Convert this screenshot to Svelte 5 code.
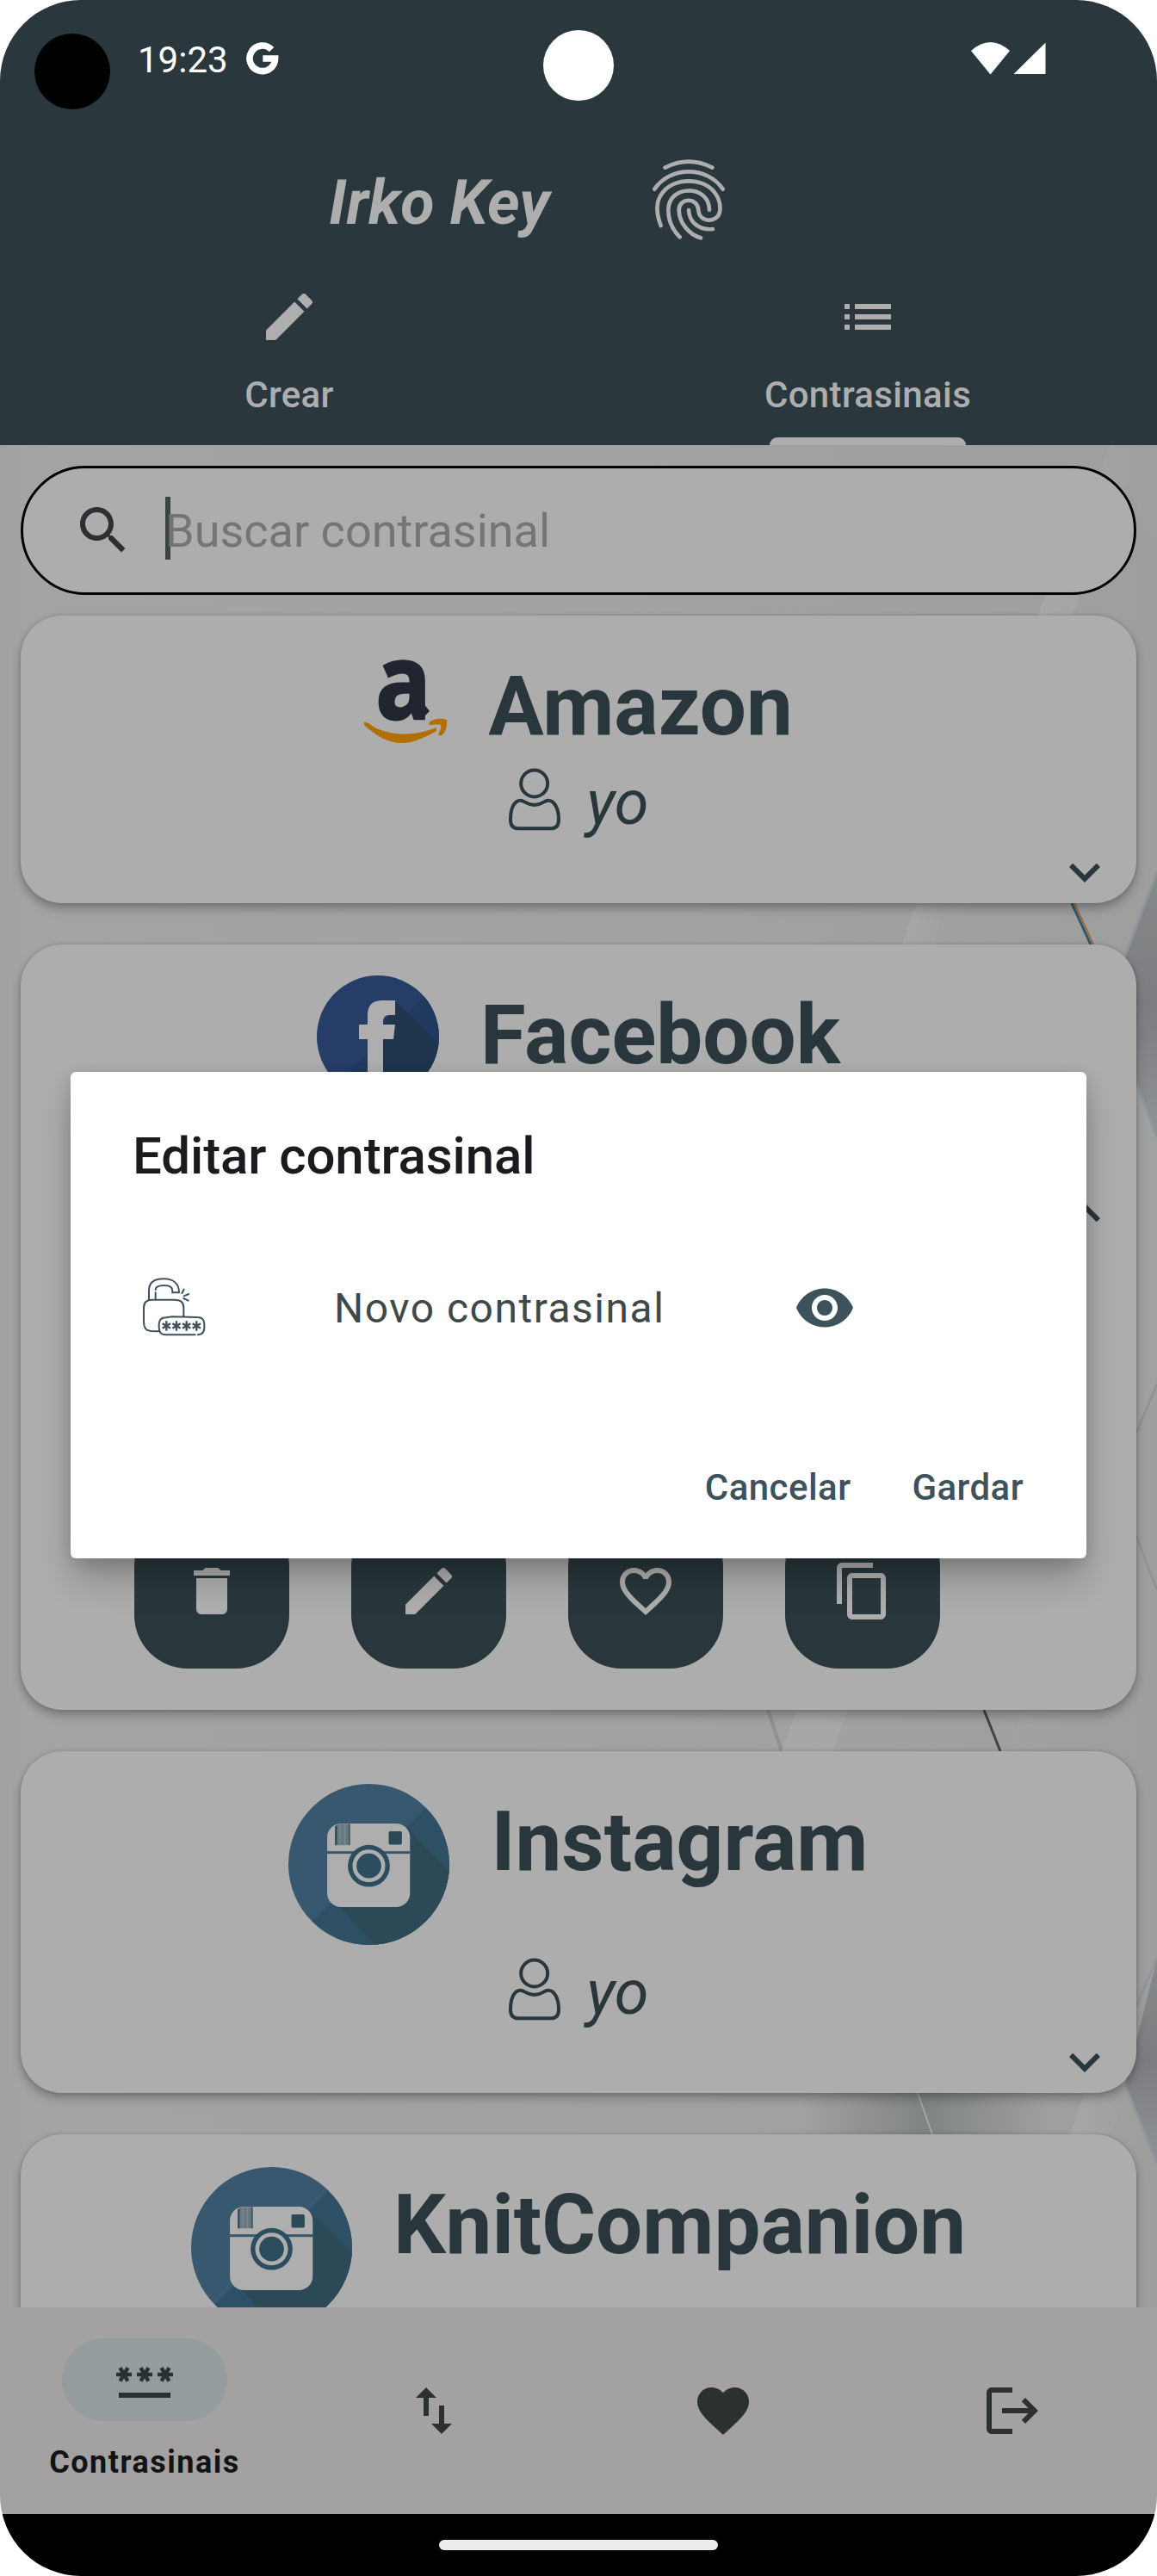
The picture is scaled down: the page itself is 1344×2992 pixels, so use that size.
<script>
  const icons = {
    edit: 'M3 17.25V21h3.75L17.81 9.94l-3.75-3.75L3 17.25zM20.71 7.04c.39-.39.39-1.02 0-1.41l-2.34-2.34c-.39-.39-1.02-.39-1.41 0l-1.83 1.83 3.75 3.75 1.83-1.83z',
    list: 'M3 13h2v-2H3v2zm0 4h2v-2H3v2zm0-8h2V7H3v2zm4 4h14v-2H7v2zm0 4h14v-2H7v2zM7 7v2h14V7H7z',
    search: 'M15.5 14h-.79l-.28-.27C15.41 12.59 16 11.11 16 9.5 16 5.91 13.09 3 9.5 3S3 5.91 3 9.5 5.91 16 9.5 16c1.61 0 3.09-.59 4.23-1.57l.27.28v.79l5 4.99L20.49 19l-4.99-5zm-6 0C7.01 14 5 11.99 5 9.5S7.01 5 9.5 5 14 7.01 14 9.5 11.99 14 9.5 14z',
    down: 'M16.59 8.59L12 13.17 7.41 8.59 6 10l6 6 6-6z',
    up: 'M12 8l-6 6 1.41 1.41L12 10.83l4.59 4.58L18 14z',
    trash: 'M6 19c0 1.1.9 2 2 2h8c1.1 0 2-.9 2-2V7H6v12zM19 4h-3.5l-1-1h-5l-1 1H5v2h14V4z',
    heartLine: 'M16.5 3c-1.74 0-3.41.81-4.5 2.09C10.91 3.81 9.24 3 7.5 3 4.42 3 2 5.42 2 8.5c0 3.78 3.4 6.86 8.55 11.54L12 21.35l1.45-1.32C18.6 15.36 22 12.28 22 8.5 22 5.42 19.58 3 16.5 3zm-4.4 15.55l-.1.1-.1-.1C7.14 14.24 4 11.39 4 8.5 4 6.5 5.5 5 7.5 5c1.54 0 3.04.99 3.57 2.36h1.87C13.46 5.99 14.96 5 16.5 5c2 0 3.5 1.5 3.5 3.5 0 2.89-3.14 5.74-7.9 10.05z',
    copy: 'M16 1H4c-1.1 0-2 .9-2 2v14h2V3h12V1zm3 4H8c-1.1 0-2 .9-2 2v14c0 1.1.9 2 2 2h11c1.1 0 2-.9 2-2V7c0-1.1-.9-2-2-2zm0 16H8V7h11v14z',
    eye: 'M12 4.5C7 4.5 2.73 7.61 1 12c1.73 4.39 6 7.5 11 7.5s9.27-3.11 11-7.5c-1.73-4.39-6-7.5-11-7.5zM12 17c-2.76 0-5-2.24-5-5s2.24-5 5-5 5 2.24 5 5-2.24 5-5 5zm0-8c-1.66 0-3 1.34-3 3s1.34 3 3 3 3-1.34 3-3-1.34-3-3-3z',
    swap: 'M9 3L5 6.99h3V14h2V6.99h3L9 3zm7 14.01V10h-2v7.01h-3L15 21l4-3.99h-3z',
    heart: 'M12 21.35l-1.45-1.32C5.4 15.36 2 12.28 2 8.5 2 5.42 4.42 3 7.5 3c1.74 0 3.41.81 4.5 2.09C13.09 3.81 14.76 3 16.5 3 19.58 3 22 5.42 22 8.5c0 3.78-3.4 6.86-8.55 11.54L12 21.35z',
    logout: 'M17 7l-1.41 1.41L18.17 11H8v2h10.17l-2.58 2.58L17 17l5-5zM4 5h8V3H4c-1.1 0-2 .9-2 2v14c0 1.1.9 2 2 2h8v-2H4V5z',
    star: 'M3.15 12.95L4 11.47l.85 1.48 1.3-.75-.85-1.48H7v-1.5H5.3l.85-1.47L4.85 7 4 8.47 3.15 7l-1.3.75.85 1.47H1v1.5h1.7l-.85 1.48z',
  };
  const entries = [
    { name: 'Amazon', kind: 'amazon', user: 'yo' },
    { name: 'Facebook', kind: 'facebook', open: true },
    { name: 'Instagram', kind: 'instagram', user: 'yo' },
    { name: 'KnitCompanion', kind: 'knit' },
  ];
  const actions = ['trash', 'edit', 'heartLine', 'copy'];
</script>

{#snippet icon(name)}
  <svg class="icon" viewBox="0 0 24 24"><path d={icons[name]} /></svg>
{/snippet}

{#snippet logo(kind)}
  {#if kind === 'amazon'}
    <svg class="logo" width="96" height="96" viewBox="0 0 96 96">
      <text class="amazon-a" x="13.5" y="68" textLength="64" lengthAdjust="spacingAndGlyphs">a</text>
      <path class="tail" d="M57 56L67 68L76 59L69 50Z" />
      <path class="smile" d="M0 72 C4 71 8 76 14 79 C36 88 58 88 84 78 L84 82 C66 92 55 96 44 96 C28 96 14 88 0 75Z" />
      <path class="smile" d="M75 74 C76 69 87 66 96 69 C97 77 94 85 89 88 L86 86 C88 82 90 78 89 75 C85 74 81 75 76 75Z" />
    </svg>
  {:else if kind === 'facebook'}
    <svg class="logo" width="142" height="142" viewBox="0 0 142 142">
      <clipPath id="fb"><circle cx="71" cy="71" r="71" /></clipPath>
      <g clip-path="url(#fb)">
        <rect width="142" height="142" fill="#263d68" />
        <path d="M125 24L20 129L60 160H160V20Z" fill="#22395e" />
        <path d="M92 30L142 80V142H60V90Z" fill="#1f354e" />
      </g>
      <path d="M49 57H59V44Q60 29 76 29H91V46H84Q77 46 77 54V57H91L89 74H77V142H59V74H49Z" fill="#aeaeae" />
    </svg>
  {:else}
    <svg class="logo" width="187" height="187" viewBox="48 37 560 560">
      <clipPath id="ig"><circle cx="328" cy="317" r="280" /></clipPath>
      <g clip-path="url(#ig)">
        <rect x="48" y="37" width="560" height="560" fill="#38586f" />
        <path d="M525 120L125 520L345 740L750 335Z" fill="#2e5064" />
        <path d="M465 195L640 370V620H370L225 465Z" fill="#2c4958" />
      </g>
      <rect x="183" y="175" width="288" height="290" rx="48" fill="#aeaeae" />
      <path d="M210 185L218 178V250H210Z" fill="#2f4b59" />
      <rect x="218" y="176" width="42" height="74" fill="#687880" />
      <path d="M228 176V250M244 176V250" stroke="#7b888e" stroke-width="4" />
      <rect x="257" y="176" width="6" height="74" fill="#425a66" />
      <rect x="397" y="202" width="46" height="46" rx="5" fill="#2c4958" />
      <rect x="183" y="271" width="288" height="9" fill="#38586a" />
      <circle cx="328" cy="322" r="73" fill="#2c4d5e" />
      <circle cx="328" cy="322" r="57" fill="#aeaeae" />
      <circle cx="328" cy="322" r="43" fill="#2c4d5e" />
    </svg>
  {/if}
{/snippet}

<div class="phone">
  <header>
    <div class="status">
      <span class="clock">19:23</span>
      <svg class="google" width="38" height="38" viewBox="0 0 38 38">
        <path d="M29.5 8.6A14.8 14.8 0 1 0 33.6 19H19.3" fill="none" stroke="#fff" stroke-width="7.6" />
      </svg>
      <svg class="signal" width="88" height="38" viewBox="0 0 88 38">
        <path d="M0 10Q22.5 -10 45 10L22.5 37.5Z" fill="#fff" />
        <path d="M86.500 .5V37H49.500Z" fill="#fff" />
      </svg>
    </div>
    <div class="brand">
      <h1>Irko Key</h1>
      <svg class="finger" width="120" height="120" viewBox="0 0 360 360">
        <path d="M98 74Q180 32 262 74M61 149C115 68 245 68 299 149M83 276C63 225 69 185 90 160C130 108 230 108 270 160C284 178 291 200 289 222C286 269 216 269 214 222C211 177 147 177 146 222C146 265 180 307 222 319M252 221C252 132 108 132 109 222C109 258 125 292 149 316M180 222C182 266 218 293 264 288" />
      </svg>
    </div>
    <nav class="tabs">
      <div class="tab">{@render icon('edit')}<span>Crear</span></div>
      <div class="tab active">{@render icon('list')}<span>Contrasinais</span></div>
    </nav>
  </header>

  <main>
    <svg class="backdrop" width="1344" height="2163" viewBox="0 517 1344 2163">
      <defs>
        <linearGradient id="base" x1="0" x2="1" y1="0" y2="0">
          <stop offset="0" stop-color="#a1a1a1" /><stop offset=".02" stop-color="#a4a4a4" />
          <stop offset=".6" stop-color="#a2a2a2" /><stop offset="1" stop-color="#9e9e9e" />
        </linearGradient>
        <linearGradient id="dusk" x1="0" x2="0" y1="0" y2="1">
          <stop offset="0" stop-color="#88898a" /><stop offset=".5" stop-color="#7c7d80" /><stop offset="1" stop-color="#909294" />
        </linearGradient>
        <linearGradient id="fade" x1="0" x2="1" y1="0" y2="0">
          <stop offset="0" stop-color="#7f8382" stop-opacity="0" /><stop offset="1" stop-color="#7f8382" />
        </linearGradient>
        <linearGradient id="unfade" x1="0" x2="1" y1="0" y2="0">
          <stop offset="0" stop-color="#7d8281" /><stop offset="1" stop-color="#7f8382" stop-opacity="0" />
        </linearGradient>
        <linearGradient id="ray" x1="0" x2="1" y1="0" y2="0">
          <stop offset="0" stop-color="#a8a8a8" /><stop offset="1" stop-color="#a8a8a8" stop-opacity="0" />
        </linearGradient>
      </defs>
      <rect y="517" width="1344" height="2163" fill="url(#base)" />
      <path d="M1290 517L1205 715H1245L1310 560L1344 640V517Z" fill="url(#ray)" />
      <path d="M1064 1049L1048 1097H1085L1098 1049Z" fill="url(#ray)" />
      <path d="M1344 1012L1307 1110L1320 1258L1344 1321Z" fill="url(#dusk)" />
      <path d="M1320 1258L1344 1321V1600L1320 1660Z" fill="#a0a1a2" />
      <path d="M1320 1258L1344 1321M1344 1012L1307 1110" stroke="#8e979c" stroke-width="3" />
      <path d="M1320 1664L1344 1608M1320 1784L1344 1847" stroke="#918f8d" stroke-width="2" />
      <path d="M1245 1049L1267 1097" stroke="#2f596b" stroke-width="3" />
      <path d="M1248 1049L1270 1097" stroke="#9a6b41" stroke-width="2" />
      <path d="M892 1986L908 2034" stroke="#919191" stroke-width="4" />
      <path d="M925 1986H985L968 2034H908ZM1190 1986H1246L1225 2034H1170Z" fill="url(#ray)" />
      <path d="M1143 1986L1162 2034" stroke="#3d4547" stroke-width="3" />
      <path d="M1344 2275L1307 2422L1344 2513Z" fill="url(#dusk)" />
      <path d="M1344 2275L1320 2330M1307 2422L1344 2513" stroke="#8e979c" stroke-width="3" />
      <path d="M930 2431H1066L1083 2479H930Z" fill="url(#fade)" />
      <path d="M1066 2431H1220V2479H1083Z" fill="url(#unfade)" />
      <path d="M1066 2431L1083 2479" stroke="#a6a6a6" stroke-width="2" />
      <path d="M1260 2431H1310L1290 2479H1243Z" fill="url(#ray)" />
    </svg>

    <div class="search">
      {@render icon('search')}
      <i class="caret"></i>
      <span>Buscar contrasinal</span>
    </div>

    {#each entries as e}
      <article class={e.kind}>
        <div class="name">{@render logo(e.kind)}<h2>{e.name}</h2></div>
        {#if e.user}
          <div class="user">
            <svg width="62" height="73" viewBox="576 454 186 219">
              <circle cx="668" cy="508" r="46.500" />
              <path d="M585 634C585 595 598 567 620 567C634 567 640 583 668 583C696 583 702 567 716 567C738 567 753 595 753 634C753 655 744 665 726 665H612C594 665 585 655 585 634Z" />
            </svg>
            <em>{e.user}</em>
          </div>
        {/if}
        <div class="toggle">{@render icon(e.open ? 'up' : 'down')}</div>
        {#if e.open}
          <div class="actions">
            {#each actions as a}<div class="action">{@render icon(a)}</div>{/each}
          </div>
        {/if}
      </article>
    {/each}
  </main>

  <nav class="bottom">
    <div class="item selected">
      <div class="pill">
        <svg class="icon" viewBox="0 0 24 24">
          <path d="M2 17h20v2H2z" />
          <path d={icons.star} /><path d={icons.star} transform="translate(8)" /><path d={icons.star} transform="translate(16)" />
        </svg>
      </div>
      <span>Contrasinais</span>
    </div>
    {#each ['swap', 'heart', 'logout'] as n}<div class="item">{@render icon(n)}</div>{/each}
  </nav>
  <footer><i></i></footer>

  <div class="overlay">
    <section class="dialog">
      <h3>Editar contrasinal</h3>
      <div class="field">
        <svg class="lock" width="100" height="100" viewBox="0 0 300 300">
          <path d="M69 122V90C69 60 90 49 120 49C150 49 174 62 174 97H151V91C151 78 140 72 122 72C100 72 92 77 92 87M92 97V122M104 232L76 231C60 230 51 218 51 200V150C51 130 60 122 80 122H160C182 122 190 134 190 150V181M230 244H128C112 244 104 236 104 218V208C104 192 112 184 128 184L150 181L238 183C254 183 262 192 262 208V220C262 236 254 243 240 244M184 99L191 86M191 109L207 102M190 117L206 125" />
          {#each [130, 165, 200, 235] as x}
            <path class="ast" d="M0 -17V17M-14 -8.500L14 8.500M-14 8.500L14 -8.500" transform={`translate(${x} 213)`} />
          {/each}
        </svg>
        <span>Novo contrasinal</span>
        {@render icon('eye')}
      </div>
      <div class="buttons"><span>Cancelar</span><span>Gardar</span></div>
    </section>
  </div>

  <i class="dot"></i>
  <i class="camera"></i>
</div>

<style>
  :global(body) { margin: 0; background: #fff; }
  .phone {
    position: relative; width: 1344px; height: 2992px; overflow: hidden; border-radius: 94px;
    display: flex; flex-direction: column; font-family: Roboto, sans-serif; color: #29373c;
  }
  h1, h2, h3 { margin: 0; }
  svg { display: block; flex: none; }
  .icon { width: 72px; height: 72px; fill: currentColor; }

  header { height: 517px; background: #2a383d; color: #aeaeae; flex: none; }
  .status { height: 140px; display: flex; align-items: center; padding: 0 128px 0 160px; color: #fff; }
  .clock { font-size: 42px; line-height: 60px; width: 126px; }
  .google { margin-bottom: 4px; }
  .signal { margin: 0 0 4px auto; }
  .brand { height: 190px; display: flex; align-items: center; padding-left: 382px; }
  .brand h1 { width: 358px; padding-top: 2px; font: italic 700 72px/90px Roboto, sans-serif; }
  .finger { margin-bottom: 10px; fill: none; stroke: #aeaeae; stroke-width: 14; stroke-linecap: round; }
  .tabs { display: flex; height: 187px; }
  .tab { position: relative; flex: 1; display: flex; flex-direction: column; align-items: center; gap: 25px; padding-top: 2px; font: 500 42px/60px Roboto, sans-serif; letter-spacing: .35px; }
  .tab.active::after { content: ''; position: absolute; bottom: 0; width: 228px; height: 9px; border-radius: 9px 9px 0 0; background: #aeaeae; }

  main { position: relative; height: 2163px; flex: none; overflow: hidden; display: flex; flex-direction: column; padding: 24px 24px 0; box-sizing: border-box; }
  .backdrop { position: absolute; left: 0; top: 0; }
  .search {
    position: relative; flex: none; height: 150px; box-sizing: border-box; border: 3px solid #000; border-radius: 75px; background: #adadad;
    display: flex; align-items: center; padding-left: 57px; margin-bottom: 24px; color: #757575; font-size: 54px;
  }
  .search .icon { color: #2f2e33; }
  .caret { width: 6px; height: 73px; margin: 0 -6px 5px 36px; background: #3a4346; }

  article {
    position: relative; flex: none; box-sizing: border-box; margin-bottom: 48px; border-radius: 48px; background: #adadad;
    box-shadow: 0 6px 12px rgba(0, 0, 0, .28), 0 0 4px rgba(0, 0, 0, .14); display: flex; flex-direction: column;
  }
  .amazon { height: 334px; }
  .facebook { height: 889px; }
  .instagram, .knit { height: 397px; }
  .name { display: flex; align-items: flex-start; justify-content: center; gap: 48px; height: 177px; flex: none; }
  .instagram .name, .knit .name { height: 240px; }
  .name h2 { padding-top: 49px; font: 700 96px/112px Roboto, sans-serif; }
  .logo { overflow: visible; }
  .amazon .logo { margin-top: 52px; }
  .facebook .logo { margin-top: 36px; }
  .instagram .logo, .knit .logo { margin-top: 38px; }
  .amazon-a { font: 700 120px 'Open Sans', sans-serif; fill: #20252f; stroke: #20252f; stroke-width: 3; }
  .tail { fill: #20252f; }
  .smile { fill: #b06f00; }
  .user { display: flex; justify-content: center; gap: 29px; height: 85px; flex: none; }
  .user svg { fill: none; stroke: #29373c; stroke-width: 12; }
  .user em { font-size: 72px; line-height: 82px; }
  .toggle { display: flex; justify-content: flex-end; padding-right: 24px; margin-top: auto; }
  .facebook .toggle { margin-top: 99px; }
  .actions { display: flex; gap: 72px; padding: 0 132px 48px; margin-top: auto; }
  .action { width: 180px; height: 180px; border-radius: 62px; background: #29373c; color: #aeaeae; display: flex; align-items: center; justify-content: center; }

  .bottom { height: 240px; flex: none; display: flex; background: #a3a1a1; color: #2c3031; }
  .item { width: 336px; display: flex; align-items: center; justify-content: center; }
  .selected { flex-direction: column; justify-content: flex-start; padding-top: 36px; box-sizing: border-box; font: 700 36px/48px Roboto, sans-serif; letter-spacing: 1.5px; color: #121414; }
  .pill { width: 192px; height: 96px; margin-bottom: 24px; border-radius: 48px; background: #959c9e; color: #2a3134; display: flex; align-items: center; justify-content: center; }
  .pill .icon { flex: none; }
  footer { height: 72px; flex: none; background: #000; display: flex; justify-content: center; align-items: center; }
  footer i { width: 324px; height: 12px; border-radius: 6px; background: #ececec; }

  .overlay { position: absolute; inset: 0; display: flex; justify-content: center; align-items: flex-start; padding-top: 1245px; }
  .dialog {
    width: 1180px; height: 565px; box-sizing: border-box; padding: 62px 68px 0; background: #fff; border-radius: 6px; color: #3e525b;
    box-shadow: 0 26px 42px -4px rgba(0, 0, 0, .24), 0 4px 18px rgba(0, 0, 0, .14);
  }
  .dialog h3 { padding: 1px 0 0 4px; font: 500 60px/70px Roboto, sans-serif; letter-spacing: -.1px; color: #1b1b1f; }
  .field { display: flex; align-items: center; margin-top: 91px; height: 100px; }
  .lock { fill: none; stroke: #3e525b; stroke-width: 6; stroke-linecap: round; }
  .ast { stroke-linecap: butt; stroke-width: 7; }
  .field span { width: 535px; margin-left: 138px; font-size: 48px; letter-spacing: 1.5px; color: #404848; }
  .field .icon { margin-left: -1px; }
  .buttons { display: flex; justify-content: flex-end; gap: 71px; margin-top: 129px; padding-right: 5px; font: 500 42px/60px Roboto, sans-serif; letter-spacing: .45px; }

  .dot, .camera { position: absolute; border-radius: 50%; }
  .dot { left: 40px; top: 39px; width: 88px; height: 88px; background: #000; }
  .camera { left: 631px; top: 35px; width: 82px; height: 82px; background: #fff; }
</style>
